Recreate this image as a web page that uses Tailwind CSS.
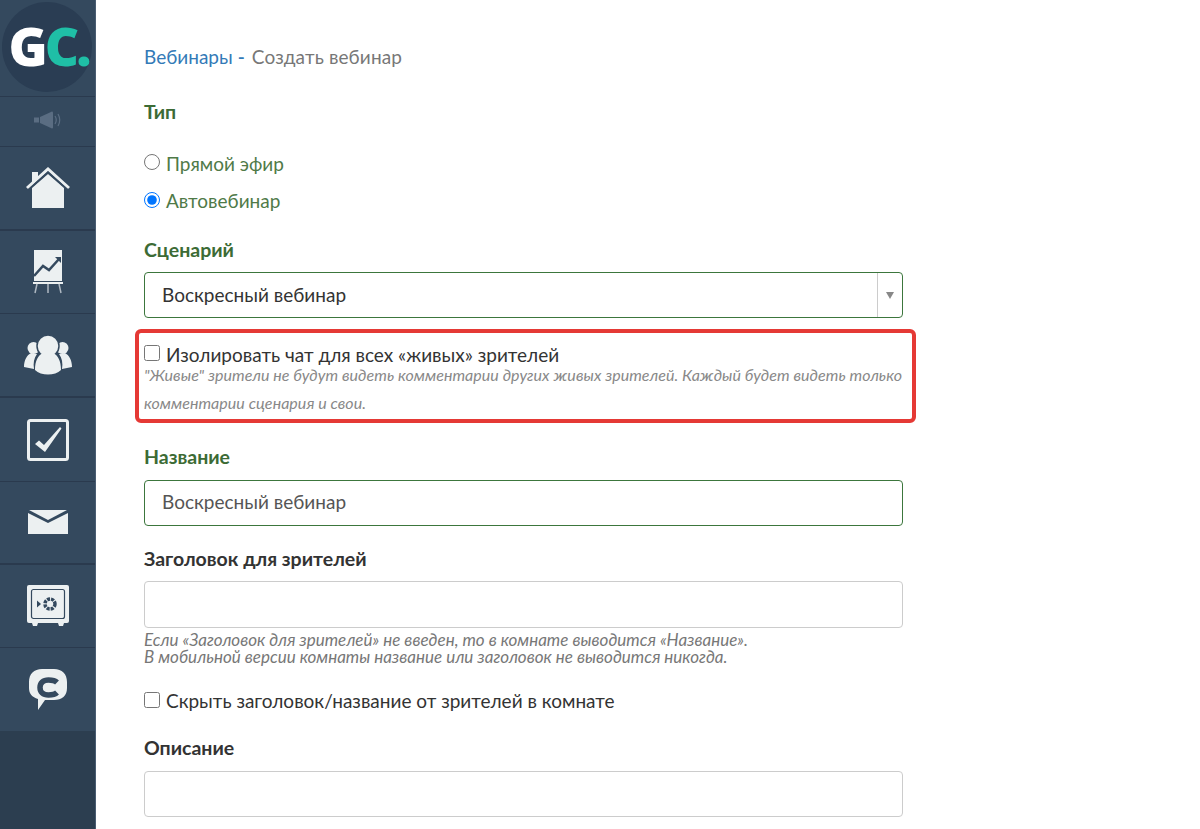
<!DOCTYPE html>
<html lang="ru">
<head>
<meta charset="utf-8">
<script src="https://cdn.jsdelivr.net/npm/@tailwindcss/browser@4"></script>
</head>
<body class="bg-white overflow-hidden font-['Lato','Noto_Sans',sans-serif]">
<div class="flex h-[829px] w-[1200px] overflow-hidden">
  <aside class="w-[96px] shrink-0 bg-[#2c3e50] border-r border-r-[#4a5d72] flex flex-col">
    <div class="h-[97px] bg-[#34495e] border-b border-b-[#2a3a4e] flex items-start justify-center pt-[2px] pr-px">
      <div class="w-[90px] h-[90px] rounded-full bg-[#2a3d53] flex items-center justify-center font-['Open_Sans',sans-serif] font-extrabold text-[53px] tracking-[-3px] leading-none pb-1 pl-[3px]">
        <span class="text-white">G</span><span class="text-[#1fbfa6]">C.</span>
      </div>
    </div>
    <div class="h-[50px] bg-[#34495e] border-b border-b-[#2a3a4e] flex items-center justify-center pb-1">
      <svg width="28" height="18" viewBox="0 0 28 18" fill="#5a6d82"><rect x="0" y="6.500" width="5" height="5"/><path d="M6 6l12-5.500a1 1 0 0 1 1 1v15a1 1 0 0 1-1 1L6 12z"/><path d="M21 5q2.500 4 0 8M24 3q3.500 6 0 12" fill="none" stroke="#5a6d82" stroke-width="1.200"/></svg>
    </div>
    <div class="h-[84px] bg-[#34495e] border-b-2 border-b-[#2a3a4e] flex items-center justify-center">
      <svg width="44" height="42" viewBox="0 0 44 42" fill="#ecf0f1"><path d="M6 21 22 7l16 14v20H6z"/><path d="M1 21 22 2l21 19" fill="none" stroke="#ecf0f1" stroke-width="3"/><path d="M6 5h6v6l-6 5z"/><path d="M1.500 23.500 22 5.500l20.500 18" fill="none" stroke="#34495e" stroke-width="1.500"/></svg>
    </div>
    <div class="h-[83px] bg-[#34495e] border-b border-b-[#2a3a4e] flex items-center justify-center">
      <svg width="32" height="44" viewBox="0 0 32 44"><rect x="2" y="0" width="28" height="31" fill="#ecf0f1"/><path d="M2 26 11 16l6 4L27 9" fill="none" stroke="#34495e" stroke-width="2.500"/><path d="M23 7h6v6z" fill="#34495e"/><rect x="1" y="32" width="30" height="2" fill="#ecf0f1"/><path d="M5 34 3 43M16 34v9M27 34l2 9" stroke="#aeb8c2" stroke-width="1.500"/></svg>
    </div>
    <div class="h-[84px] bg-[#34495e] border-b-2 border-b-[#2a3a4e] flex items-center justify-center">
      <svg width="48" height="40" viewBox="0 0 48 40" fill="#ecf0f1"><circle cx="9.500" cy="13" r="6"/><circle cx="38.500" cy="13" r="6"/><path d="M0 32c0-7 3-12 7-14l6 1c-3 4-4 9-3 15z"/><path d="M48 32c0-7-3-12-7-14l-6 1c3 4 4 9 3 15z"/><circle cx="24" cy="11" r="11" stroke="#34495e" stroke-width="1.500"/><path d="M11 35c0-9 3-15 8-17 3 3 7 3 10 0 5 2 8 8 8 17-6 6-20 6-26 0z"/></svg>
    </div>
    <div class="h-[84px] bg-[#34495e] border-b border-b-[#2a3a4e] flex items-center justify-center">
      <svg width="42" height="42" viewBox="0 0 42 42"><rect x="1.500" y="1.500" width="39" height="39" rx="2" fill="none" stroke="#ecf0f1" stroke-width="3"/><path d="M8 25l4-3.500 5 4.500L33 8l1.500 1.500L18 33z" fill="#ecf0f1"/></svg>
    </div>
    <div class="h-[83px] bg-[#34495e] border-b-2 border-b-[#2a3a4e] flex items-center justify-center">
      <svg width="42" height="25" viewBox="0 0 42 25" fill="#ecf0f1"><path d="M1 3 21 13 41 3V24H1z"/><path d="M2 0h38L21 10z"/></svg>
    </div>
    <div class="h-[83px] bg-[#34495e] border-b border-b-[#2a3a4e] flex items-center justify-center">
      <svg width="42" height="42" viewBox="0 0 42 42"><rect x="0" y="0" width="42" height="38" rx="2" fill="#ecf0f1"/><rect x="4.500" y="4.500" width="33" height="29" rx="2" fill="none" stroke="#34495e" stroke-width="1.200"/><circle cx="23" cy="19" r="5" fill="none" stroke="#34495e" stroke-width="3.500" stroke-dasharray="3 1"/><path d="M10 15.500l4 3.500-4 3.500z" fill="#34495e"/><path d="M5 38h6l-1 3H6zM31 38h6l-1 3h-4z" fill="#ecf0f1"/></svg>
    </div>
    <div class="h-[83px] bg-[#34495e] flex items-center justify-center">
      <svg width="38" height="42" viewBox="0 0 38 42"><path d="M13 0h12c8 0 13 5 13 13v6c0 8-5 12-13 12h-9l-7 10 0-11C3 28 0 25 0 19v-6C0 5 5 0 13 0z" fill="#ecf0f1"/><path d="M28 13.500C26 11.500 23 11 19.500 11c-5.500 0-8.500 3-8.500 7.500s3 7.500 8.500 7.500c3.500 0 6.500-.5 8.500-2.500" fill="none" stroke="#34495e" stroke-width="5.500"/></svg>
    </div>
  </aside>
  <main class="relative flex-1 pl-[48px] text-[19px] leading-[24px]">
    <div class="mt-[45px] text-[#777] flex"><a class="text-[#337ab7]">Вебинары</a><span class="text-[#337ab7] font-semibold ml-[5px] mr-[7px]">-</span><span class="tracking-[0.13px]">Создать вебинар</span></div>
    <div class="w-[759px]">
      <div class="mt-[31px] font-bold text-[#3c6b35] text-[19.500px]">Тип</div>
      <label class="mt-[28px] flex items-center text-[#4f7a48] h-[24px]"><input type="radio" name="t" class="w-[16px] h-[16px] mr-[6px] mb-[4px] accent-[#0075ff]">Прямой эфир</label>
      <label class="mt-[13px] flex items-center text-[#4f7a48] h-[24px]"><input type="radio" name="t" checked class="w-[16px] h-[16px] mr-[6px] mb-[2px] accent-[#0075ff]">Автовебинар</label>
      <div class="mt-[25px] font-bold text-[#3c6b35] text-[19.500px]">Сценарий</div>
      <div class="mt-[10px] h-[46px] border border-[#3c763d] rounded-[4px] flex items-center text-[#333]">
        <div class="flex-1 pl-[17px] pb-[1px]">Воскресный вебинар</div>
        <div class="w-[25px] h-full border-l border-l-[#ccc] flex items-center justify-center"><svg width="8" height="7" viewBox="0 0 8 7" fill="#888"><path d="M0 0h8L4 7z"/></svg></div>
      </div>
      <label class="mt-[25px] flex items-center text-[#333] h-[24px]"><input type="checkbox" class="w-[16px] h-[16px] mr-[6px] mb-[4px]">Изолировать чат для всех «живых» зрителей</label>
      <div class="text-[16px] italic leading-[28px] text-[#888] -mt-[6px] w-[770px] tracking-[0.05px]">"Живые" зрители не будут видеть комментарии других живых зрителей. Каждый будет видеть только комментарии сценария и свои.</div>
      <div class="mt-[28px] font-bold text-[#3c6b35] text-[19.500px]">Название</div>
      <div class="mt-[11px] h-[46px] border border-[#3c763d] rounded-[4px] flex items-center pl-[17px] text-[#555] pb-[3px]">Воскресный вебинар</div>
      <div class="mt-[21px] font-bold text-[#333] text-[19.500px]">Заголовок для зрителей</div>
      <div class="mt-[10px] h-[47px] border border-[#ccc] rounded-[4px]"></div>
      <div class="mt-[3px] text-[17px] italic leading-[17px] text-[#777]">Если «Заголовок для зрителей» не введен, то в комнате выводится «Название».<br>В мобильной версии комнаты название или заголовок не выводится никогда.</div>
      <label class="mt-[24px] flex items-center text-[#333] h-[24px]"><input type="checkbox" class="w-[16px] h-[16px] mr-[6px] mb-[2px]">Скрыть заголовок/название от зрителей в комнате</label>
      <div class="mt-[23px] font-bold text-[#333] text-[19.500px]">Описание</div>
      <div class="mt-[11px] h-[46px] border border-[#ccc] rounded-[4px]"></div>
    </div>
    <div class="absolute left-[39px] top-[329px] w-[781px] h-[94px] border-[4px] border-[#e53935] rounded-[6px]"></div>
  </main>
</div>
</body>
</html>
